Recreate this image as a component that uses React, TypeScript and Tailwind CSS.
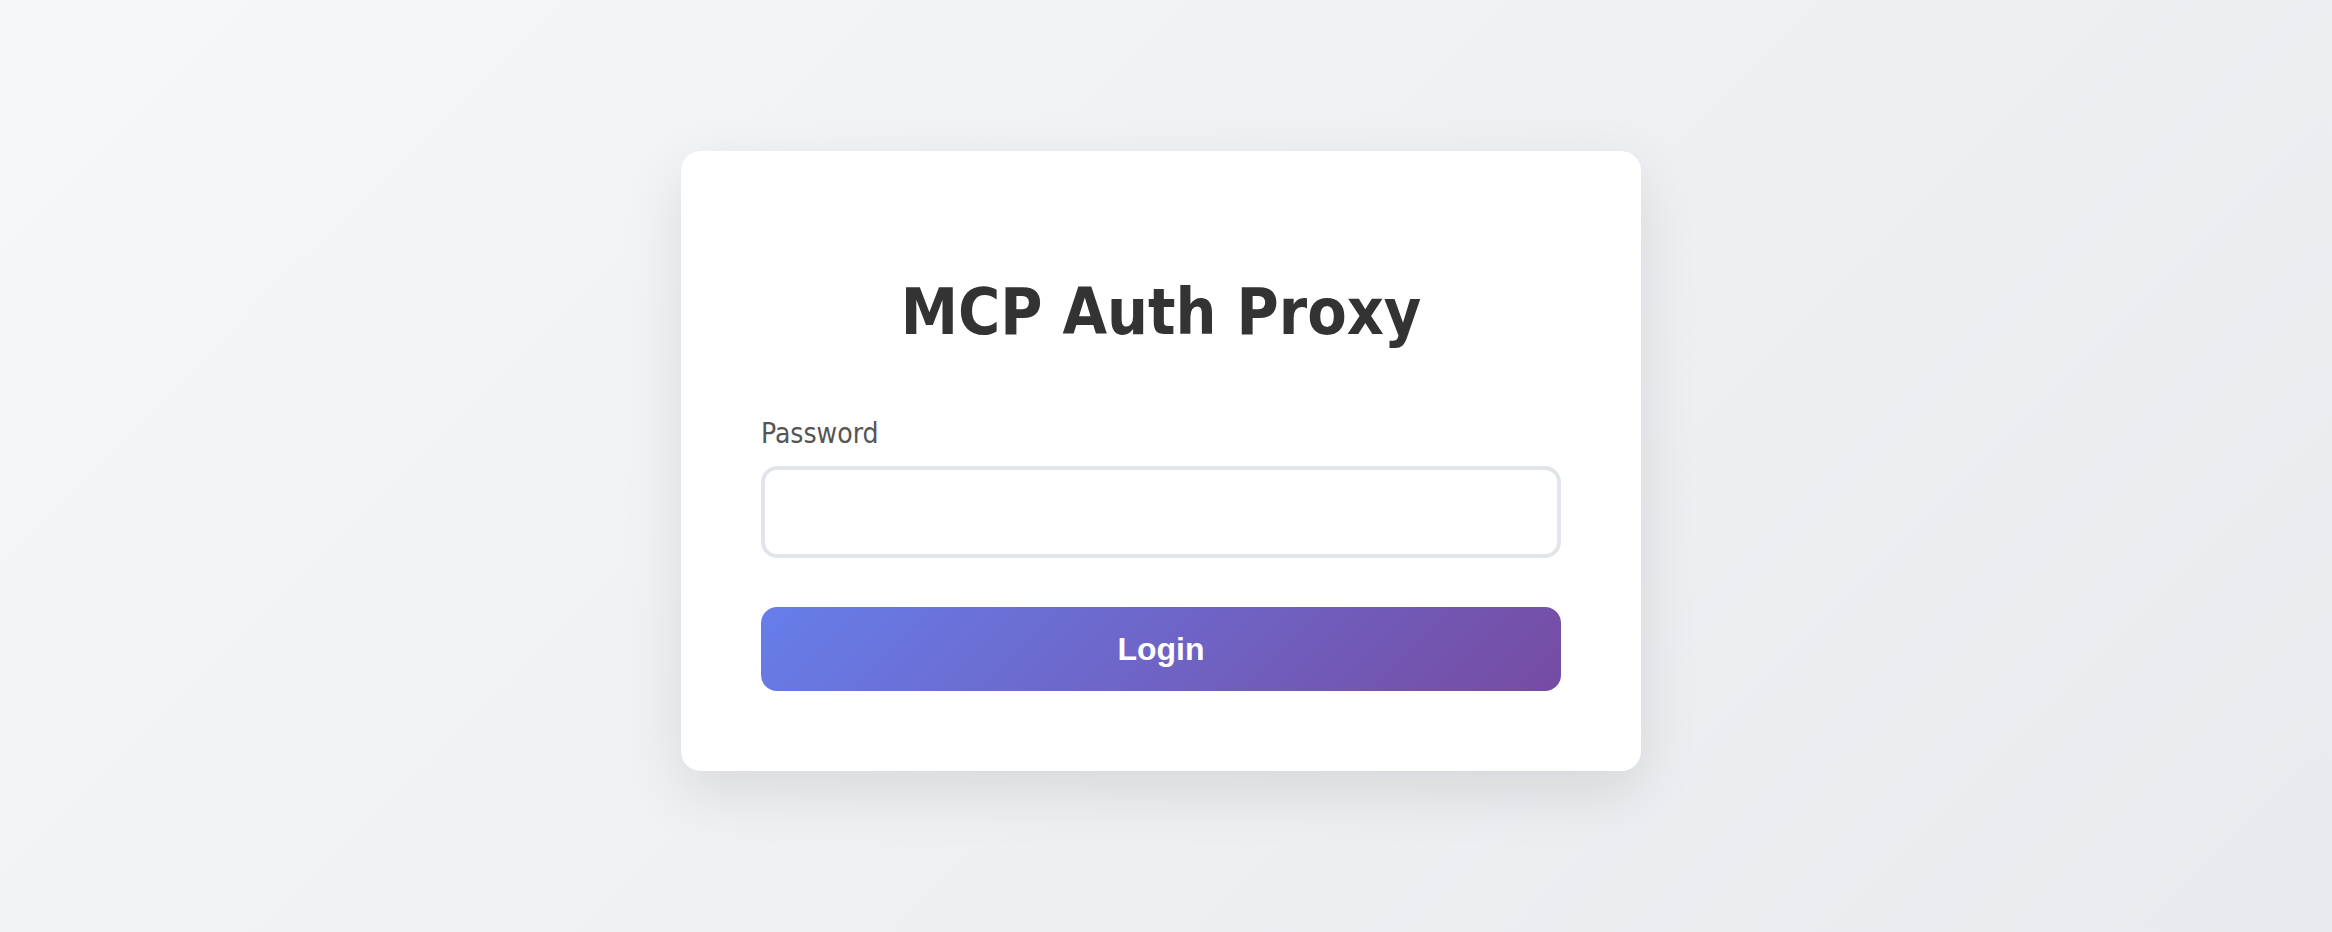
import React from "react";

export default function App() {
  return (
    <div className="h-[932px] w-full flex items-center justify-center pb-[10px] pr-[10px] bg-[linear-gradient(135deg,#f6f7f9_0%,#e8eaed_100%)]">
      <div className="w-[960px] bg-white rounded-[20px] p-[80px] shadow-[0_20px_60px_rgba(0,0,0,0.1)] font-['DejaVu_Sans_Condensed','DejaVu_Sans',sans-serif] [font-stretch:condensed]">
        <h1 className="mt-[44px] text-center text-[64px] font-bold leading-[74px] text-[#333333]">
          MCP Auth Proxy
        </h1>
        <form className="mt-[66px] flex flex-col" onSubmit={(e) => e.preventDefault()}>
          <label className="mt-[2px] text-[28px] leading-[33px] text-[#555555]">Password</label>
          <input
            type="password"
            className="mt-[16px] h-[92px] w-full rounded-[16px] border-[4px] border-[#e1e5e9] bg-white px-[24px] text-[28px] outline-none"
          />
          <button
            type="submit"
            className="mt-[49px] h-[84px] w-full rounded-[16px] bg-[linear-gradient(135deg,#667eea_0%,#764ba2_100%)] text-white text-[32px] font-bold font-['Liberation_Sans',Arial,sans-serif] [font-stretch:normal]"
          >
            Login
          </button>
        </form>
      </div>
    </div>
  );
}
